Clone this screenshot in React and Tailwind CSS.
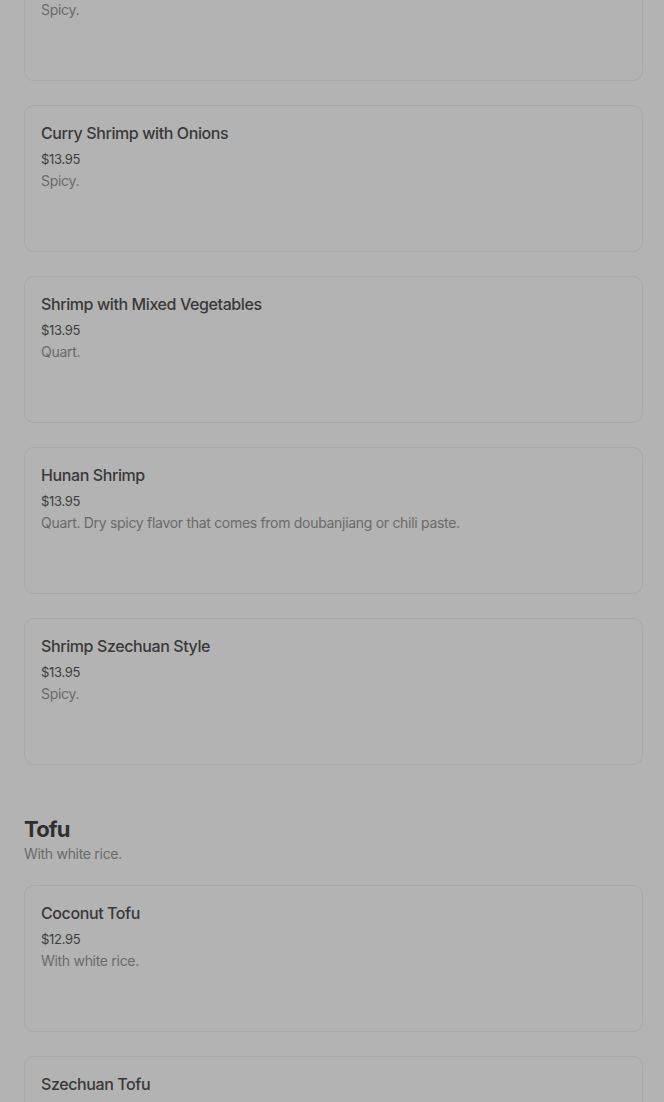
import React from 'react';

const shrimp = [
    { name: 'Shrimp with Garlic Sauce', price: '$13.95', desc: 'Spicy.' },
    { name: 'Curry Shrimp with Onions', price: '$13.95', desc: 'Spicy.' },
    { name: 'Shrimp with Mixed Vegetables', price: '$13.95', desc: 'Quart.' },
    { name: 'Hunan Shrimp', price: '$13.95', desc: 'Quart. Dry spicy flavor that comes from doubanjiang or chili paste.' },
    { name: 'Shrimp Szechuan Style', price: '$13.95', desc: 'Spicy.' },
];

const tofu = [
    { name: 'Coconut Tofu', price: '$12.95', desc: 'With white rice.' },
    { name: 'Szechuan Tofu', price: '$12.95', desc: 'Spicy.' },
];

const MenuCard = ({ item }) => (
    <div className="h-[147px] rounded-[10px] border border-[#a8a8a8] px-4 pt-[15px]">
        <h3 className="text-[16px] leading-6 font-medium text-[#393939] tracking-[-0.4px]">{item.name}</h3>
        <p className="mt-1 text-[13px] leading-5 text-[#3e3e3e] tracking-[-0.3px]">{item.price}</p>
        <p className="mt-[2px] text-[14px] leading-5 text-[#6a6a6a] tracking-[-0.3px]">{item.desc}</p>
    </div>
);

const App = () => {
    return (
        <div className="min-h-screen w-full overflow-hidden bg-[#b3b3b3] font-['Inter',sans-serif]">
            <div className="-mt-[66px] px-6 pr-[21px]">
                <div className="flex flex-col gap-6">
                    {shrimp.map((item) => (
                        <MenuCard key={item.name} item={item} />
                    ))}
                </div>

                <section className="mt-12">
                    <h2 className="text-[22px] leading-8 font-bold text-[#2f2f2f] tracking-[-0.8px]">Tofu</h2>
                    <p className="-mt-[1px] text-[14px] leading-5 text-[#6a6a6a] tracking-[-0.3px]">With white rice.</p>
                    <div className="mt-[21px] flex flex-col gap-6">
                        {tofu.map((item) => (
                            <MenuCard key={item.name} item={item} />
                        ))}
                    </div>
                </section>
            </div>
        </div>
    );
};

export default App;
